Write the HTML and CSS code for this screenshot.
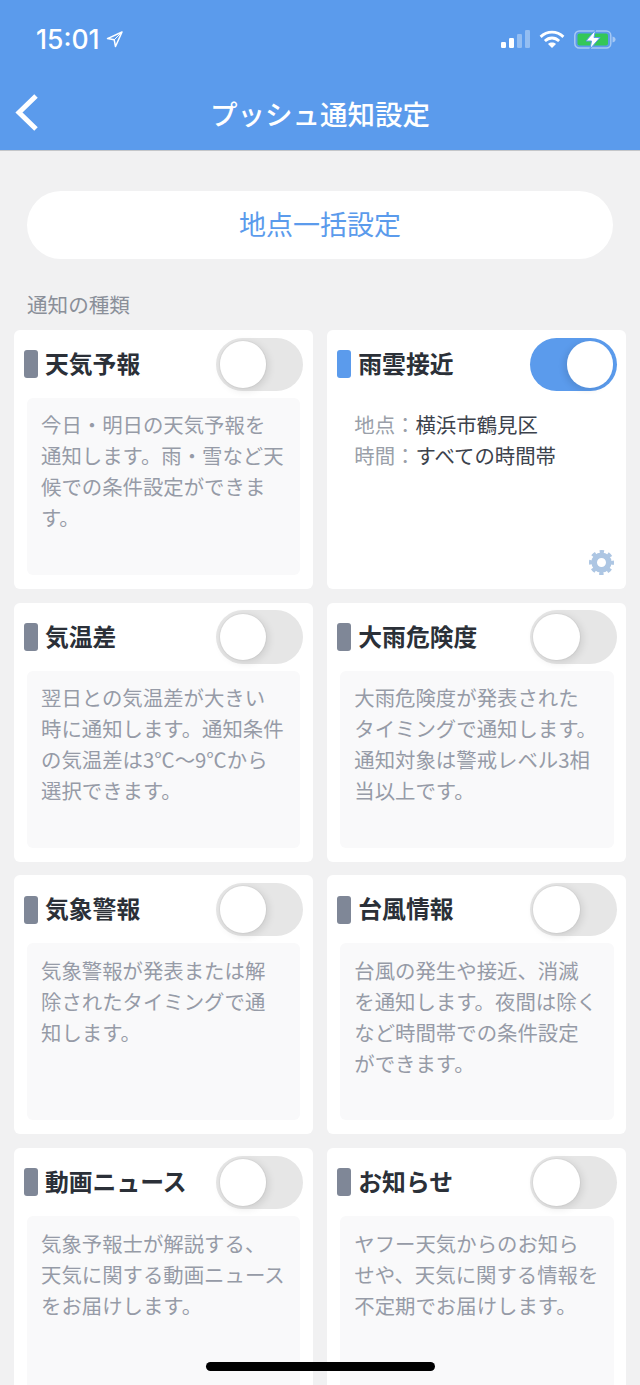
FILE: index.html
```html
<!DOCTYPE html>
<html lang="ja">
<head>
  <meta charset="UTF-8" />
  <title>プッシュ通知設定</title>
  <link rel="stylesheet" href="styles.css">
</head>
<body>

<div class="header">
  <div class="status">
    <div class="status-left">
      <span class="time">15:01</span>
      <svg class="loc" width="17" height="17" viewBox="0 0 17 17"><path d="M16 1 1.500 7.600l6.700 1.200 1.300 6.700z" fill="none" stroke="#fff" stroke-width="1.500" stroke-linejoin="round"/><path d="M16 1 8.200 8.800" stroke="#fff" stroke-width="1"/></svg>
    </div>
    <div class="status-right">
      <svg width="30" height="19" viewBox="0 0 30 19">
        <rect x="1" y="12" width="5" height="6" rx="1.200" fill="#fff"/>
        <rect x="9" y="8" width="5" height="10" rx="1.200" fill="#fff"/>
        <rect x="17" y="4" width="5" height="14" rx="1.200" fill="#fff" opacity=".35"/>
        <rect x="25" y="0" width="5" height="18" rx="1.200" fill="#fff" opacity=".35"/>
      </svg>
      <svg width="26" height="19" viewBox="0 0 27 20" fill="none" stroke="#fff" stroke-width="3">
        <path d="M1.500 7.200C8.500.6 18.500.6 25.500 7.200"/>
        <path d="M6 11.600c4.500-4.200 10.500-4.200 15 0"/>
        <path d="M13.500 19l-4.200-4.300c2.500-2 5.900-2 8.400 0z" fill="#fff" stroke="none"/>
      </svg>
      <svg width="42" height="19" viewBox="0 0 42 19">
        <rect x=".8" y="1" width="36" height="17" rx="4.500" fill="none" stroke="#fff" stroke-opacity=".45" stroke-width="1.500"/>
        <rect x="3.500" y="3.500" width="30.500" height="12" rx="2" fill="#34c759"/>
        <path d="M38.500 6.500c2 .4 3 1.500 3 3s-1 2.600-3 3z" fill="#fff" opacity=".45"/>
        <path d="M21.500 0 12 11h5.500l-1.500 8 10-11.500h-6z" fill="#fff" stroke="#5b9bec" stroke-width="1"/>
      </svg>
    </div>
  </div>
  <div class="nav">
    <svg class="back" width="26" height="38" viewBox="0 0 26 38"><path d="M22 3 5 19.500 22 36" fill="none" stroke="#fff" stroke-width="5"/></svg>
    <h1>プッシュ通知設定</h1>
  </div>
</div>

<div class="content">
  <div class="bulk-btn">地点一括設定</div>
  <div class="section-label">通知の種類</div>

  <div class="grid">
    <div class="card">
      <div class="card-head">
        <span class="mark"></span><span class="card-title">天気予報</span>
        <span class="toggle"><span class="knob"></span></span>
      </div>
      <div class="desc">今日・明日の天気予報を<br>通知します。雨・雪など天<br>候での条件設定ができま<br>す。</div>
    </div>

    <div class="card">
      <div class="card-head">
        <span class="mark on"></span><span class="card-title">雨雲接近</span>
        <span class="toggle on"><span class="knob"></span></span>
      </div>
      <div class="detail">
        <div><span class="detail-key">地点：</span>横浜市鶴見区</div>
        <div><span class="detail-key">時間：</span>すべての時間帯</div>
        <svg class="gear" width="25" height="25" viewBox="0 0 25 25" fill="none" stroke="#adc6e3">
          <circle cx="12.500" cy="12.500" r="7.300" stroke-width="5.600"/>
          <circle cx="12.500" cy="12.500" r="10.500" stroke-width="4" stroke-dasharray="4.200 4.047" stroke-dashoffset="2.100"/>
        </svg>
      </div>
    </div>

    <div class="card">
      <div class="card-head">
        <span class="mark"></span><span class="card-title">気温差</span>
        <span class="toggle"><span class="knob"></span></span>
      </div>
      <div class="desc">翌日との気温差が大きい<br>時に通知します。通知条件<br>の気温差は3℃〜9℃から<br>選択できます。</div>
    </div>

    <div class="card">
      <div class="card-head">
        <span class="mark"></span><span class="card-title">大雨危険度</span>
        <span class="toggle"><span class="knob"></span></span>
      </div>
      <div class="desc">大雨危険度が発表された<br>タイミングで通知します。<br>通知対象は警戒レベル3相<br>当以上です。</div>
    </div>

    <div class="card">
      <div class="card-head">
        <span class="mark"></span><span class="card-title">気象警報</span>
        <span class="toggle"><span class="knob"></span></span>
      </div>
      <div class="desc">気象警報が発表または解<br>除されたタイミングで通<br>知します。</div>
    </div>

    <div class="card">
      <div class="card-head">
        <span class="mark"></span><span class="card-title">台風情報</span>
        <span class="toggle"><span class="knob"></span></span>
      </div>
      <div class="desc">台風の発生や接近、消滅<br>を通知します。夜間は除く<br>など時間帯での条件設定<br>ができます。</div>
    </div>

    <div class="card">
      <div class="card-head">
        <span class="mark"></span><span class="card-title">動画ニュース</span>
        <span class="toggle"><span class="knob"></span></span>
      </div>
      <div class="desc">気象予報士が解説する、<br>天気に関する動画ニュース<br>をお届けします。</div>
    </div>

    <div class="card">
      <div class="card-head">
        <span class="mark"></span><span class="card-title">お知らせ</span>
        <span class="toggle"><span class="knob"></span></span>
      </div>
      <div class="desc">ヤフー天気からのお知ら<br>せや、天気に関する情報を<br>不定期でお届けします。</div>
    </div>
  </div>
</div>

<div class="home-bar"></div>

</body>
</html>
```

FILE: styles.css
```css
html, body {
  margin: 0;
  height: 1385px;
  overflow: hidden;
}
body {
  font-family: "Noto Sans CJK JP", "Noto Sans", sans-serif;
  background: #f1f1f2;
  color: #2b3038;
}
.header {
  background: #5b9bec;
  height: 150px;
  border-bottom: 1px solid #c4c6c9;
}
.status {
  height: 78px;
  display: flex;
  justify-content: space-between;
  align-items: center;
  padding: 0 24px 0 36px;
}
.status-left, .status-right {
  display: flex;
  align-items: center;
  color: #fff;
}
.status-right {
  gap: 9px;
}
.time {
  font-family: Inter, sans-serif;
  font-size: 26.500px;
  font-weight: 500;
}
.loc {
  margin-left: 6px;
}
.nav {
  height: 72px;
  display: flex;
  align-items: center;
  justify-content: center;
  position: relative;
}
.back {
  position: absolute;
  left: 14px;
  top: 15px;
}
.nav h1 {
  margin: 0;
  color: #fff;
  font-size: 27.500px;
  font-weight: 500;
  line-height: 1;
}
.content {
  padding: 40px 14px 0;
}
.bulk-btn {
  margin: 0 13px;
  height: 68px;
  line-height: 66px;
  border-radius: 34px;
  background: #fff;
  color: #5b9bec;
  font-size: 27px;
  text-align: center;
}
.section-label {
  margin: 29px 13px 10px;
  font-size: 20.600px;
  line-height: 32px;
  color: #8a8f99;
}
.grid {
  display: grid;
  grid-template-columns: 299px 299px;
  gap: 13.700px 14.300px;
}
.card {
  background: #fff;
  border-radius: 6px;
  height: 259px;
  padding: 7.700px 9.600px 14px 10px;
  box-sizing: border-box;
  display: flex;
  flex-direction: column;
}
.card-head {
  display: flex;
  align-items: center;
  height: 53.300px;
  margin-bottom: 7px;
  flex: none;
}
.mark {
  width: 14px;
  height: 28px;
  border-radius: 3px;
  background: #7f8797;
  margin-right: 7px;
}
.mark.on {
  background: #5b9bec;
}
.card-title {
  font-size: 23.800px;
  font-weight: 700;
  flex: 1;
  white-space: nowrap;
  margin-top: -4px;
}
.toggle {
  width: 87px;
  height: 53.300px;
  border-radius: 27px;
  background: #e6e6e6;
  position: relative;
  flex: none;
}
.knob {
  position: absolute;
  left: 3.300px;
  top: 3.300px;
  width: 46.700px;
  height: 46.700px;
  border-radius: 50%;
  background: #fff;
  box-shadow: 2px 2px 8px rgba(0, 0, 0, .12), 0 0 0 1px rgba(0, 0, 0, .03);
}
.toggle.on {
  background: #5b9bec;
}
.toggle.on .knob {
  left: 37px;
  box-shadow: -3px 2px 6px rgba(0, 0, 0, .1);
}
.desc, .detail {
  flex: 1;
  margin: 0 3px;
  padding: 11.500px 14px;
  border-radius: 6px;
  font-size: 20.400px;
  line-height: 31px;
  white-space: nowrap;
}
.desc {
  background: #f9f9fa;
  color: #969ba7;
}
.detail {
  position: relative;
  color: #3c424c;
}
.detail-key {
  color: #9a9fa9;
}
.gear {
  position: absolute;
  right: 0;
  bottom: 0;
}
.home-bar {
  position: absolute;
  left: 206px;
  top: 1362px;
  width: 229px;
  height: 9px;
  border-radius: 5px;
  background: #000;
}
```
